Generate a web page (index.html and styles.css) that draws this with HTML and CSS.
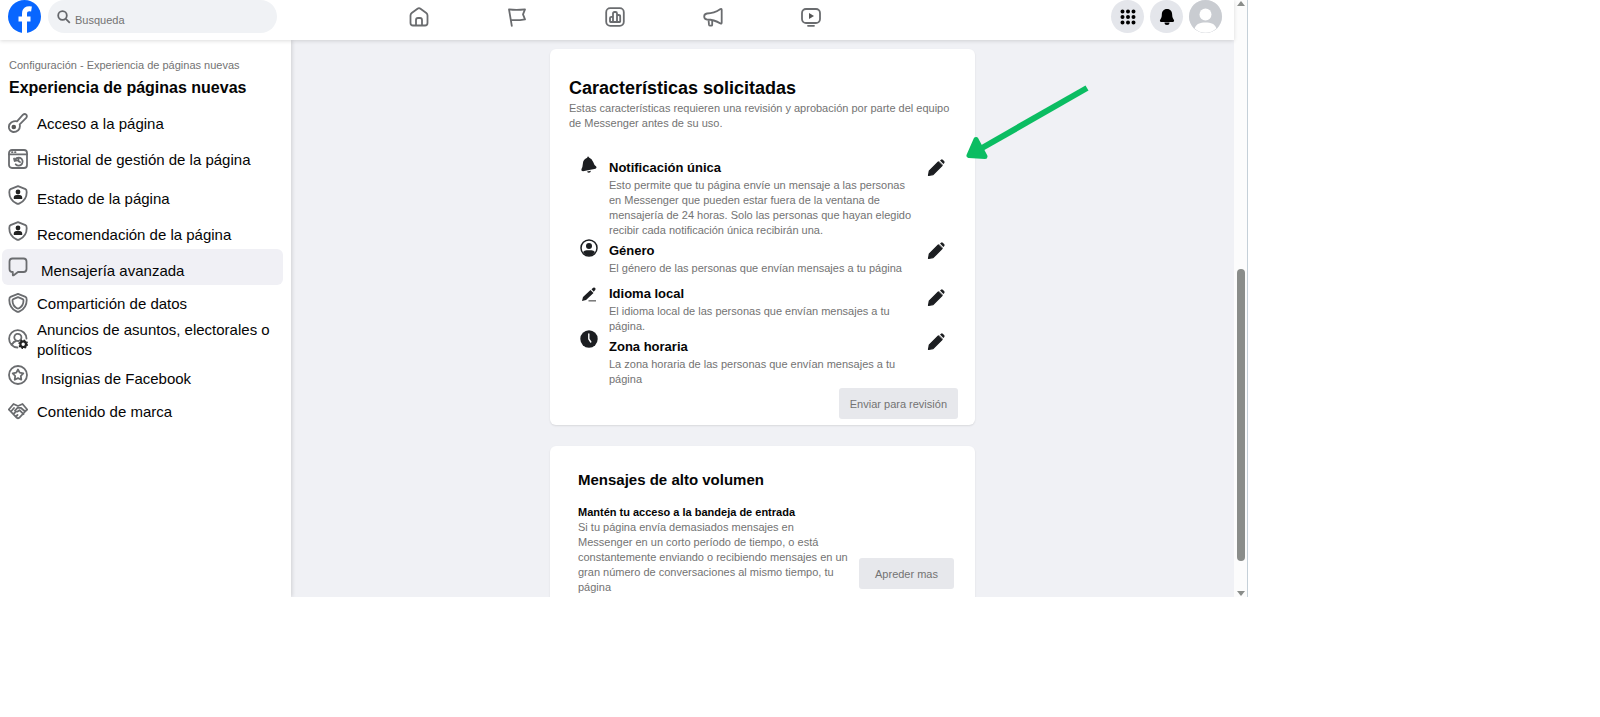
FILE: index.html
```html
<!doctype html>
<html lang="es">
	<head>
		<meta charset="UTF-8">
		<title>Experiencia de páginas nuevas</title>
		<link rel="stylesheet" href="styles.css">
	</head>
	<body>
		<!-- shared icons -->
		<svg class="sprite" aria-hidden="true">
			<symbol id="pencil" viewBox="0 0 20 20">
				<path d="M2.600 17.400l.8-4.400 9-9 3.600 3.600-9 9z" stroke-width="1.400" stroke-linejoin="round" stroke="#1c1e21" fill="#1c1e21"/>
				<path d="M14 2.600l1-.9q1-.8 2 .2l1.100 1.100q1 1 .2 2l-.9 1z" fill="#1c1e21"/>
				<path d="M13 3.300l3.700 3.700" stroke="#999" stroke-width="1"/>
			</symbol>
			<symbol id="shield-user" viewBox="0 0 20 20">
				<path class="line" d="M10 1.200l7.500 3c1.200.5 1.200 1.500 1.200 3 0 5-2.500 9-7.200 11.200q-1.500.8-3 0C3.800 16.200 1.300 12.200 1.300 7.200c0-1.500 0-2.500 1.200-3z"/>
				<circle cx="10" cy="7" r="2.400" fill="#222"/>
				<path d="M5.800 14v-1.500q0-2.500 2.700-2.500h3q2.700 0 2.700 2.500V14z" fill="#222"/>
			</symbol>
		</svg>

		<div class="app">
			<div class="window">
				<header class="topbar">
					<div class="topleft">
						<a class="logo" href="#" aria-label="Facebook">
							<svg viewBox="0 0 33 33">
								<circle cx="16.500" cy="16.500" r="16.500" fill="#0866ff"/>
								<path d="M16.500 33V14c0-4.200 2.200-5.800 7-5M10.500 19h12" fill="none" stroke="#fff" stroke-width="5"/>
							</svg>
						</a>
						<label class="search">
							<svg viewBox="0 0 14 14"><circle cx="5.500" cy="5.500" r="4.300"/><path d="M8.800 8.800l4 4"/></svg>
							<input type="text" placeholder="Busqueda" aria-label="Busqueda">
						</label>
					</div>
					<nav class="tabs">
						<a href="#" aria-label="Inicio"><svg viewBox="0 0 20 20"><path class="line" d="M1.500 8.500Q1.500 7 2.700 6L8.500 1.700q1.500-1.100 3 0L17.300 6q1.200 1 1.200 2.500v7.500q0 2.500-2.500 2.500H4q-2.500 0-2.500-2.500zM7 18.500v-5.500q0-2 2-2h2q2 0 2 2v5.500"/></svg></a>
						<a href="#" aria-label="Páginas"><svg viewBox="0 0 20 20"><path class="line" d="M4.800 18.800L2 2.300q7 1 16 0l-2 5 2 5q-7 1.200-14.300.7"/></svg></a>
						<a href="#" aria-label="Estadísticas"><svg viewBox="0 0 20 20"><rect class="line" x="1.200" y="1.200" width="17.600" height="17.600" rx="4"/><path class="line" d="M5 14.500v-3.500q0-1.200 1.500-1.200h1.500v5.200h-2.500q-.5 0-.5-.5zM8 15V6.500Q8 5 9.500 5h1Q12 5 12 6.500V15H8M12 8h1.500Q15.200 8 15.200 9.500v5q0 .5-.5.5H12"/></svg></a>
						<a href="#" aria-label="Anuncios"><svg viewBox="0 0 20 20"><path class="line" d="M1.200 9.500q0-2.700 2.800-3 7 0 13.500-4.500 1.200-.5 1.200 1v12.500q0 1.500-1.200 1Q11 12.500 4 12.500q-2.800-.3-2.800-3zM5.500 12.700l.5 5q.2 1 1.200 1h1q1 0 1-1v-4.500"/></svg></a>
						<a href="#" aria-label="Video"><svg viewBox="0 0 20 20"><rect class="line" x="1" y="2" width="18" height="14" rx="4"/><path d="M8 6l5 3-5 3z" fill="#555"/><path class="line" d="M7 18.800h6"/></svg></a>
					</nav>
					<div class="actions">
						<button class="round" aria-label="Menú">
							<svg viewBox="0 0 16 16"><path d="M2.500 2.500h0M8 2.500h0M13.500 2.500h0M2.500 8h0M8 8h0M13.500 8h0M2.500 13.500h0M8 13.500h0M13.500 13.500h0" stroke="#000" stroke-width="4" stroke-linecap="round"/></svg>
						</button>
						<button class="round" aria-label="Notificaciones">
							<svg viewBox="0 0 16 16"><path d="M8 0C4.500 0 2.800 2.500 2.800 6c0 2.500-.8 3.500-1.600 4.800-.7 1.200-.2 2.200 1 2.200h11.600c1.200 0 1.700-1 1-2.200-.8-1.300-1.600-2.300-1.600-4.800C13.200 2.500 11.500 0 8 0zM5.500 13.500a2.500 2.500 0 0 0 5 0z"/></svg>
						</button>
						<button class="round" aria-label="Cuenta">
							<svg class="avatar" viewBox="0 0 33 33"><circle cx="16.500" cy="16.500" r="16.500" fill="#c9ccd1"/><circle cx="16.500" cy="14.500" r="6" fill="#fff"/><path d="M5.500 28.500C7 24 11 22.500 16.500 22.500S26 24 27.500 28.500A16.500 16.500 0 0 1 5.500 28.500z" fill="#fff"/></svg>
						</button>
					</div>
				</header>

				<div class="content">
					<aside class="sidebar">
						<p class="crumb">Configuración - Experiencia de páginas nuevas</p>
						<h1 class="side-title">Experiencia de páginas nuevas</h1>
						<nav class="menu">
							<a class="item" href="#">
								<svg viewBox="0 0 20 20"><path class="line" d="M9 8.300L15 1.700q1.700-1.400 3.200 0 1.300 1.500 0 3.200l-6.500 6.400q.8 3.700-1.500 6-2.300 1.900-5 1.700-3.800-.8-4.400-4.500 0-3.500 2.700-5.300Q6.500 7.700 9 8.300z"/><circle cx="5.800" cy="14" r="2.300" fill="#555"/></svg>
								<span>Acceso a la página</span>
							</a>
							<a class="item" href="#">
								<svg viewBox="0 0 20 20"><rect class="line" x="1" y="1" width="18" height="18" rx="3"/><path class="line" d="M1 5.300h18M4 3.200h.5M7 3.200h.5"/><path class="line" d="M6 9.500l.7 2.500 2.500-.7M6.700 12a4 4 0 1 1 1 3.300M10.500 9.500v2.700l1.500.8"/></svg>
								<span>Historial de gestión de la página</span>
							</a>
							<a class="item low" href="#">
								<svg><use href="#shield-user"/></svg>
								<span>Estado de la página</span>
							</a>
							<a class="item low" href="#">
								<svg><use href="#shield-user"/></svg>
								<span>Recomendación de la página</span>
							</a>
							<a class="item low indent active" href="#">
								<svg viewBox="0 0 20 20"><path class="line" d="M4.500 1.500h11q3 0 3 3v7.500q0 3-3 3H10l-4.300 3.300q-.9.500-.9-.6V15q-3.300 0-3.300-3V4.500q0-3 3-3z"/></svg>
								<span>Mensajería avanzada</span>
							</a>
							<a class="item" href="#">
								<svg viewBox="0 0 20 20"><path class="line" d="M10 .9l7.500 3c1.200.5 1.200 1.500 1.200 3 0 5.200-2.500 9.200-7.200 11.500q-1.500.8-3 0C3.800 16.100 1.300 12.100 1.300 6.900c0-1.500 0-2.500 1.200-3z"/><path class="line" d="M10 4.200l4.700 1.900q.8.300.8 1.500c0 3.500-1.700 6.200-4.300 7.600q-1.200.6-2.400 0C6.200 13.800 4.500 11.100 4.500 7.600q0-1.200.8-1.500z"/></svg>
								<span>Compartición de datos</span>
							</a>
							<a class="item" href="#">
								<svg viewBox="0 0 20 20"><path class="line" d="M9.500 18.500a8.700 8.700 0 1 1 9-9M4 15.500q1.500-3 4-3.500M10.500 12h-.5a3.600 3.600 0 1 1 1.500-.4"/><circle cx="15.200" cy="15.200" r="2.800" fill="none" stroke="#222" stroke-width="2.200"/><circle cx="15.200" cy="15.200" r="4.200" fill="none" stroke="#222" stroke-width="1.300" stroke-dasharray="1.650 1.650"/></svg>
								<span>Anuncios de asuntos, electorales o políticos</span>
							</a>
							<a class="item low indent" href="#">
								<svg viewBox="0 0 20 20"><circle class="line" cx="10" cy="10" r="9"/><path class="line" d="M10 4.500l1.700 3.200 3.600.6-2.500 2.700.5 3.700-3.300-1.600-3.300 1.600.5-3.700-2.500-2.700 3.600-.6z"/></svg>
								<span>Insignias de Facebook</span>
							</a>
							<a class="item" href="#">
								<svg viewBox="0 0 20 20"><path class="line" d="M.8 8.500L5.500 3l4.500 2 4.500-2 4.700 5.500-2.700 2.500M.8 8.500l8 8.300q1.200 1 2.400 0l6-6.300-4.500-3.700H9.500L7 9.500q1 2 3 .7l1.500-1 4 4M3 10.500l3-3.500M5.500 13l1.500-1.500M8 15.500L9.500 14"/></svg>
								<span>Contenido de marca</span>
							</a>
						</nav>
					</aside>

					<main class="main">
						<section class="card requested">
							<h2 class="card-title">Características solicitadas</h2>
							<p class="text">Estas características requieren una revisión y aprobación por parte del equipo de Messenger antes de su uso.</p>
							<ul class="features">
								<li class="feature">
									<svg class="mark" viewBox="0 0 18 18"><path d="M7.500.8q1-.6 1.500.6 3 1 4.200 4.600.8 3 3 4.500 1 1.500-.7 2.300L3 15.300q-2 0-1.600-2Q2.700 11 2.900 7.500q.2-4 4.300-5.700zM7 15.500l4-.8q-.5 2-2 2t-2-1.200z"/></svg>
									<div class="info">
										<h3 class="name">Notificación única</h3>
										<p class="text">Esto permite que tu página envíe un mensaje a las personas en Messenger que pueden estar fuera de la ventana de mensajería de 24 horas. Solo las personas que hayan elegido recibir cada notificación única recibirán una.</p>
									</div>
									<button class="edit" aria-label="Editar notificación única"><svg><use href="#pencil"/></svg></button>
								</li>
								<li class="feature">
									<svg class="mark" viewBox="0 0 18 18"><circle cx="9" cy="9" r="8" fill="none" stroke="#1c1e21" stroke-width="1.500"/><circle cx="9" cy="7" r="3"/><path d="M3 13q1.500-1.700 3.500-1.700h5q2 0 3.500 1.700-2.500 4-6 4t-6-4z"/></svg>
									<div class="info">
										<h3 class="name">Género</h3>
										<p class="text">El género de las personas que envían mensajes a tu página</p>
									</div>
									<button class="edit" aria-label="Editar género"><svg><use href="#pencil"/></svg></button>
								</li>
								<li class="feature down">
									<svg class="mark" viewBox="0 0 18 18"><path d="M2 15l1-4 7.500-7 3 3L6 14zM11.500 3.300l1.700-1.500q1.200-.8 2 .2t0 2L13.700 5.800z"/><path d="M8.500 14.800h7.500" stroke="#777" stroke-width="1.500"/></svg>
									<div class="info">
										<h3 class="name">Idioma local</h3>
										<p class="text">El idioma local de las personas que envían mensajes a tu página.</p>
									</div>
									<button class="edit" aria-label="Editar idioma local"><svg><use href="#pencil"/></svg></button>
								</li>
								<li class="feature up">
									<svg class="mark" viewBox="0 0 18 18"><circle cx="9" cy="9" r="8.700"/><path d="M8.800 4v5l2 3" fill="none" stroke="#fff" stroke-width="1.400" stroke-linecap="round"/></svg>
									<div class="info">
										<h3 class="name">Zona horaria</h3>
										<p class="text">La zona horaria de las personas que envían mensajes a tu página</p>
									</div>
									<button class="edit" aria-label="Editar zona horaria"><svg><use href="#pencil"/></svg></button>
								</li>
							</ul>
							<button class="btn">Enviar para revisión</button>
							<svg class="arrow" viewBox="0 0 124 76"><path d="M121 3L16 63" stroke="#0bbd62" stroke-width="6"/><path d="M10 54.500L3 70.500l16 1z" fill="#0bbd62" stroke="#0bbd62" stroke-width="5" stroke-linejoin="round"/></svg>
						</section>

						<section class="card volume">
							<h2 class="volume-title">Mensajes de alto volumen</h2>
							<div class="volume-row">
								<div class="volume-text">
									<h3 class="volume-sub">Mantén tu acceso a la bandeja de entrada</h3>
									<p class="text">Si tu página envía demasiados mensajes en Messenger en un corto período de tiempo, o está constantemente enviando o recibiendo mensajes en un gran número de conversaciones al mismo tiempo, tu página</p>
								</div>
								<button class="btn">Apreder mas</button>
							</div>
						</section>
					</main>
				</div>
			</div>

			<div class="scroll" aria-hidden="true">
				<span class="scroll-up"></span>
				<span class="thumb"></span>
				<span class="scroll-down"></span>
			</div>
		</div>
	</body>
</html>
```
FILE: styles.css
```css
*{box-sizing:border-box}
body{
	margin:0;
	background-color:#fff;
	color:#050505;
	font-family:"Liberation Sans",Arial,sans-serif;
	font-size:11px
}
h1,h2,h3,p,ul{margin:0;padding:0}
a{color:inherit;text-decoration:none}
button{border:0;padding:0;font:inherit;cursor:pointer}
svg{display:block;flex:none}
.sprite{position:absolute;width:0;height:0}
.line{
	fill:none;
	stroke:#6a6c6f;
	stroke-width:1.8;
	stroke-linecap:round;
	stroke-linejoin:round
}

.app{
	display:flex;
	width:78%;
	border-right:1px solid #c5d0d8
}
.window{flex:1;min-width:0}

/* top bar */
.topbar{
	position:relative;
	z-index:1;
	display:grid;
	grid-template-columns:1fr auto 1fr;
	height:40px;
	padding:0 12px 7px 8px;
	align-items:center;
	background:#fff;
	box-shadow:0 1px 4px rgba(0,0,0,.14)
}
.topleft{display:flex;gap:7px}
.logo svg{width:33px;height:33px}
.search{
	display:flex;
	align-items:center;
	gap:4px;
	width:229px;
	height:33px;
	padding-left:9px;
	border-radius:17px;
	background:#f0f2f5
}
.search svg{
	width:14px;
	height:14px;
	fill:none;
	stroke:#65676b;
	stroke-width:1.8
}
.search input{
	width:100%;
	min-width:0;
	padding:6px 0 0;
	border:0;
	outline:0;
	background:none;
	font:inherit
}
.search input::placeholder{color:#737373;opacity:1}
.tabs{display:flex;gap:78px}
.tabs svg{width:20px;height:20px}
.actions{display:flex;justify-content:flex-end;gap:6px}
.round{
	display:flex;
	align-items:center;
	justify-content:center;
	width:33px;
	height:33px;
	border-radius:50%;
	background:#e4e6eb
}
.round svg{width:16px;height:16px}
.round .avatar{width:33px;height:33px}

/* side menu */
.content{display:flex}
.sidebar{
	position:relative;
	width:291px;
	padding-top:17px;
	background:#fff;
	box-shadow:1px 0 4px rgba(0,0,0,.14)
}
.crumb{padding-left:9px;line-height:16px;color:#737373}
.side-title{padding-left:9px;font-size:16px;line-height:30px}
.menu{display:flex;flex-direction:column;padding:2px 8px 0 2px}
.item{
	display:flex;
	align-items:center;
	gap:9px;
	height:36px;
	padding-left:6px;
	border-radius:6px;
	font-size:15px;
	line-height:20px
}
.item svg{width:20px;height:20px}
.item span{padding-top:2px}
.low span{padding-top:7px}
.indent{gap:13px}
.active{background:#f0f0f5}

/* cards */
.main{
	flex:1;
	display:flex;
	flex-direction:column;
	align-items:center;
	gap:21px;
	padding-top:9px;
	background:#f0f1f5
}
.card{
	position:relative;
	width:100%;
	max-width:425px;
	border-radius:6px;
	background:#fff;
	box-shadow:0 1px 2px rgba(0,0,0,.1)
}
.requested{padding:28px 17px 6px 19px}
.card-title{margin-bottom:2px;font-size:18px;line-height:22px}
.text{line-height:15px;color:#737373}
.features{
	display:flex;
	flex-direction:column;
	gap:3px;
	margin:27px 0 1px;
	padding:0 12px 0 11px;
	list-style:none
}
.feature{
	display:flex;
	align-items:flex-start;
	min-height:40px
}
.mark{width:18px;height:18px;margin-top:-2px;fill:#1c1e21}
.info{width:310px;margin-left:11px}
.name{font-size:13px;line-height:20px}
.edit{margin-left:auto;background:none}
.edit svg{width:20px;height:20px}
.down .mark{margin-top:2px}
.down .edit{margin-top:4px}
.up .mark{margin-top:-7px}
.up .edit{margin-top:-5px}
.btn{
	display:block;
	flex:none;
	height:31px;
	padding:0 11px;
	border-radius:3px;
	background:#e7e8ec;
	color:#737373
}
.requested .btn{margin-left:auto}
.arrow{
	position:absolute;
	left:416px;
	top:36px;
	width:124px;
	height:76px
}
.volume{
	padding:24px 21px 2px 28px;
	border-radius:6px 6px 0 0
}
.volume-title{font-size:15px;line-height:20px}
.volume-row{
	display:flex;
	align-items:flex-end;
	justify-content:space-between;
	margin-top:15px
}
.volume-text{width:271px}
.volume-sub{font-size:11px;line-height:15px}
.volume .btn{margin-bottom:6px;padding:0 16px}

/* scroll bar */
.scroll{
	display:flex;
	flex-direction:column;
	align-items:center;
	width:13px;
	padding:1px 0;
	background:#fcfcfc
}
.scroll-up,.scroll-down{border:4px solid transparent}
.scroll-up{border-top:0;border-bottom:5px solid #8a8d8a}
.scroll-down{border-bottom:0;border-top:5px solid #8a8d8a}
.thumb{
	width:8px;
	height:49%;
	margin:auto 0 30px;
	border-radius:4px;
	background:#8a8d8a
}
```
